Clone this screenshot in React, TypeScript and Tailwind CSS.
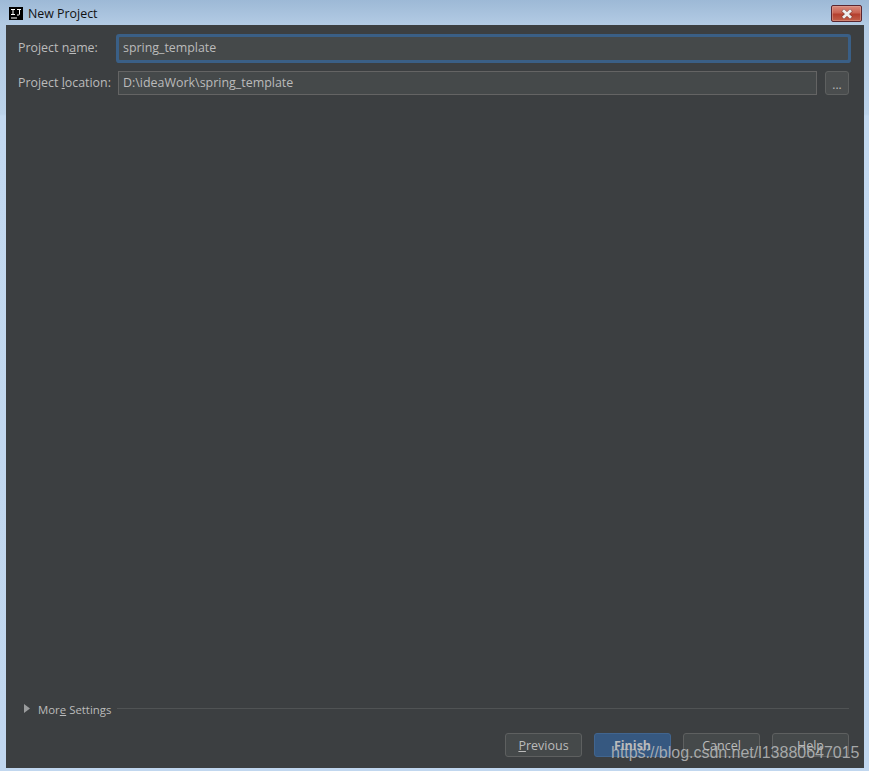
import React from "react";

const font = { fontFamily: '"Open Sans", "Noto Sans", sans-serif' };

function Btn({ children, primary }: { children: React.ReactNode; primary?: boolean }) {
  return (
    <div
      className={
        "flex h-6 w-[77px] items-center justify-center rounded-[3px] border pt-0.5 text-[12.5px] " +
        (primary
          ? "border-[#41658f] bg-[#365880] font-bold text-[#bbbbbb]"
          : "border-[#5e6060] bg-[#45494a] text-[#bbbbbb]")
      }
    >
      {children}
    </div>
  );
}

export default function App() {
  return (
    <div
      style={font}
      className="relative flex h-[771px] w-[869px] flex-col overflow-hidden bg-[linear-gradient(180deg,#9db9d6_0px,#b3cbe4_25px,#bcd3ea_114px,#c3d9f0_116px,#c1d7ef_100%)] pb-[3px] pl-1.5 pr-[5px]"
    >
      <div className="flex h-[25px] shrink-0 items-start">
        <div className="mt-[7px] ml-[3px] flex h-[13px] w-[14px] flex-col bg-black text-white">
          <svg width="14" height="13" viewBox="0 0 14 13">
            <path d="M2 2.5 H6 M4 2.5 V7.5 M2 7.5 H6 M8 2.5 H12 M10.5 2.5 V7 Q10.5 8 9.5 8 H8" stroke="#ffffff" strokeWidth="1" fill="none" />
            <path d="M2 11 H8" stroke="#ffffff" strokeWidth="1" />
          </svg>
        </div>
        <span className="mt-[5px] ml-[5px] text-[12.4px] leading-[18px] text-[#111111]">New Project</span>
        <div className="mt-[5px] mr-[2px] ml-auto flex h-[17px] w-[31px] items-center justify-center rounded-[2px] border border-[#5a2630] bg-[linear-gradient(180deg,#d98b7e_0%,#c96352_45%,#b43f2e_55%,#c2604a_100%)] shadow-[inset_0_0_0_1px_#e0a79c80]">
          <svg width="14" height="10" viewBox="0 0 14 10">
            <path d="M2.5 1 L11.5 9 M11.5 1 L2.5 9" stroke="#4a2a2a" strokeWidth="3.8" opacity="0.45" />
            <path d="M3 1.2 L11 8.8 M11 1.2 L3 8.8" stroke="#eeeeee" strokeWidth="2.8" />
          </svg>
        </div>
      </div>

      <div className="flex flex-1 flex-col bg-[#3c3f41] px-3 text-[12.5px] text-[#bbbbbb]">
        <div className="mt-[12px] flex h-[23px] items-center">
          <span className="w-[101px] shrink-0 text-[12.4px]">
            Project n<span className="underline">a</span>me:
          </span>
          <div className="mr-[4px] flex h-[23px] flex-1 items-center rounded-[1px] bg-[#45494a] pl-[4px] text-[12.4px] shadow-[0_0_0_3px_#3a5f86]">
            spring_template
          </div>
        </div>
        <div className="mt-[11px] flex h-6 items-center">
          <span className="w-[100px] shrink-0 text-[12.4px]">
            Project <span className="underline">l</span>ocation:
          </span>
          <div className="flex h-6 flex-1 items-center border border-[#646464] bg-[#45494a] pl-1 text-[12.45px]">
            D:\ideaWork\spring_template
          </div>
          <div className="mr-[3px] ml-2 flex h-6 w-6 items-center justify-center rounded-[3px] border border-[#5e6060] bg-[#4a4d4e] pt-1 text-[12px] leading-none">
            ...
          </div>
        </div>

        <div className="mt-auto flex h-3 items-center text-[11.4px]">
          <svg width="6" height="9" viewBox="0 0 6 9" className="ml-[6px] mb-[1px]">
            <path d="M0 0 L6 4.5 L0 9 Z" fill="#9a9c9d" />
          </svg>
          <span className="mt-[2px] ml-[8px]">
            Mor<span className="underline">e</span> Settings
          </span>
          <div className="mr-[3px] mb-[1px] ml-[6px] h-px flex-1 bg-[#505354]" />
        </div>
        <div className="mt-[18px] mr-[3px] mb-[11px] flex justify-end gap-3">
          <Btn>
            <span>
              <span className="underline">P</span>revious
            </span>
          </Btn>
          <Btn primary>Finish</Btn>
          <Btn>Cancel</Btn>
          <Btn>Help</Btn>
        </div>
      </div>

      <div
        className="absolute top-[743px] left-[611px] text-[16px] leading-[20px] tracking-[-0.02px] whitespace-nowrap text-[#b9bbbc]/85"
        style={{ fontFamily: '"Liberation Sans", Arial, sans-serif' }}
      >
        https://blog.csdn.net/l13880647015
      </div>
    </div>
  );
}
